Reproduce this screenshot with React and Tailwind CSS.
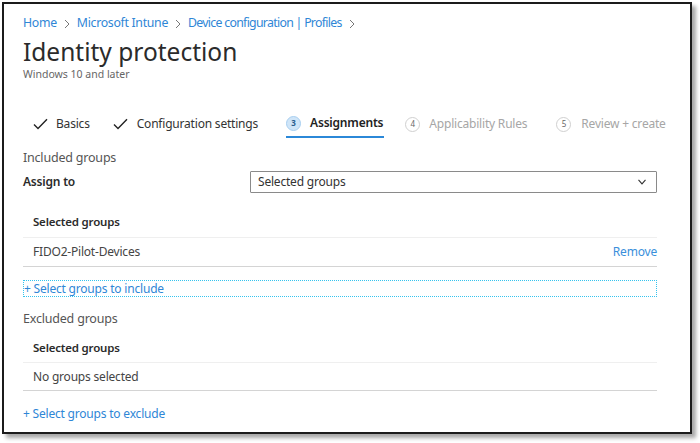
import React from "react";

const font = { fontFamily: '"Noto Sans", "Open Sans", sans-serif' };

function Check() {
  return (
    <svg width="15" height="12" viewBox="0 0 15 12" fill="none">
      <path d="M1 6.5 L5 10.5 L14 1.2" stroke="#222" strokeWidth="1.4" />
    </svg>
  );
}

function Chevron({ color = "#888" }) {
  return (
    <svg width="10" height="6" viewBox="0 0 10 6" fill="none">
      <path d="M1.5 0.8 L5 4.8 L8.5 0.8" stroke={color} strokeWidth="1.1" />
    </svg>
  );
}

function Sep() {
  return (
    <span className="mx-[7px] mt-[1px]">
      <svg width="6" height="10" viewBox="0 0 6 10">
        <path d="M1 1 L5 5 L1 9" stroke="#777" fill="none" strokeWidth="1" />
      </svg>
    </span>
  );
}

export default function App() {
  return (
    <div className="w-[700px] h-[443px] bg-white overflow-hidden" style={font}>
      <div className="ml-[2px] mt-[2px] w-[690px] h-[432px] border-2 border-[#1b1b1b] bg-white shadow-[4px_4px_4px_rgba(0,0,0,0.35)] pl-[19px] pt-[10px] box-border">
        {/* breadcrumb */}
        <div className="flex items-center h-[18px] text-[12.3px] leading-[18px] tracking-[-0.3px] text-[#2f86d6]">
          <span>Home</span>
          <Sep />
          <span>Microsoft Intune</span>
          <Sep />
          <span className="tracking-[-0.7px]">Device configuration | Profiles</span>
          <Sep />
        </div>
        {/* title */}
        <div className="mt-[5px] h-[30px] text-[24.5px] leading-[30px] text-[#2b2b2b]">Identity protection</div>
        <div className="h-[14px] text-[10.5px] leading-[14px] text-[#666]">Windows 10 and later</div>

        {/* tabs */}
        <div className="mt-[29px] flex items-stretch h-[28px] text-[12px] tracking-[-0.2px]">
          <div className="flex items-center pl-[10px]">
            <Check />
            <span className="ml-[8px] text-[#333]">Basics</span>
          </div>
          <div className="flex items-center ml-[23px]">
            <Check />
            <span className="ml-[9px] text-[#333]">Configuration settings</span>
          </div>
          <div className="flex items-center ml-[28px] border-b-2 border-[#2b88d8] pr-[1px]">
            <span className="w-[15px] h-[15px] rounded-full bg-[#cfe5f8] border border-[#a8cff0] text-[8px] font-bold text-[#2a5d8f] flex items-center justify-center leading-none">3</span>
            <span className="ml-[9px] text-[#222] font-semibold">Assignments</span>
          </div>
          <div className="flex items-center ml-[21px]">
            <span className="w-[15px] h-[15px] rounded-full border border-[#d0d0d0] text-[8px] text-[#666] flex items-center justify-center leading-none">4</span>
            <span className="ml-[9px] text-[#a6a6a6]">Applicability Rules</span>
          </div>
          <div className="flex items-center ml-[29px]">
            <span className="w-[15px] h-[15px] rounded-full border border-[#d0d0d0] text-[8px] text-[#666] flex items-center justify-center leading-none">5</span>
            <span className="ml-[10px] text-[#a6a6a6]">Review + create</span>
          </div>
        </div>

        <div className="w-[634px]">
          <div className="mt-[11px] h-[18px] text-[12.5px] leading-[18px] text-[#555] tracking-[-0.2px]">Included groups</div>
          <div className="mt-[4px] flex items-center h-[22px]">
            <span className="w-[227px] text-[12px] font-semibold text-[#2b2b2b] tracking-[-0.2px]">Assign to</span>
            <div className="flex-1 h-[22px] border border-[#8a8a8a] rounded-[1px] flex items-center justify-between pl-[7px] pr-[9px]">
              <span className="text-[12px] text-[#333] tracking-[-0.2px]">Selected groups</span>
              <Chevron color="#333" />
            </div>
          </div>

          <div className="mt-[13px] h-[32px] flex items-center pl-[10px] border-b border-[#efefef] text-[11.5px] font-semibold text-[#2b2b2b] tracking-[-0.2px]">Selected groups</div>
          <div className="h-[29px] flex items-center justify-between pl-[10px] border-b border-[#d4d4d4] text-[12px] tracking-[-0.2px]">
            <span className="text-[#444]">FIDO2-Pilot-Devices</span>
            <span className="text-[#3a8fdb]">Remove</span>
          </div>

          <div className="mt-[13px] h-[17px] border border-dotted border-[#35c3ee] flex items-center text-[12px] text-[#2f86d6] tracking-[-0.2px]">
            <span>+ Select groups to include</span>
          </div>

          <div className="mt-[13px] h-[18px] text-[12.5px] leading-[18px] text-[#555] tracking-[-0.2px]">Excluded groups</div>
          <div className="mt-[5px] h-[30px] flex items-center pl-[10px] border-b border-[#efefef] text-[11.5px] font-semibold text-[#2b2b2b] tracking-[-0.2px]">Selected groups</div>
          <div className="h-[28px] flex items-center pl-[10px] border-b border-[#d4d4d4] text-[12px] text-[#444] tracking-[-0.2px]">No groups selected</div>

          <div className="mt-[14px] h-[18px] flex items-center text-[12px] text-[#2f86d6] tracking-[-0.2px]">
            <span>+ Select groups to exclude</span>
          </div>
        </div>
      </div>
    </div>
  );
}
